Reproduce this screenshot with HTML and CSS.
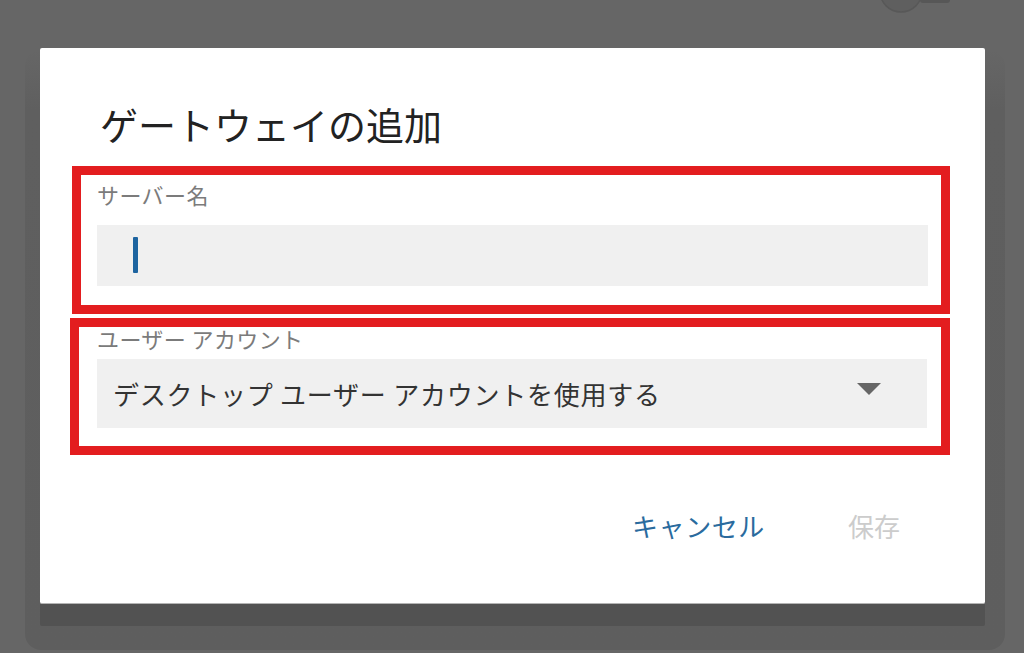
FILE: index.html
```html
<!DOCTYPE html>
<html lang="ja">
<head>
<meta charset="utf-8">
<title>ゲートウェイの追加</title>
<link rel="stylesheet" href="styles.css">
</head>
<body>
<div class="backdrop"></div>
<svg class="toggle" width="80" height="16" viewBox="0 0 80 16">
  <rect x="40" y="-4" width="30" height="7" rx="3" fill="#575757"/>
  <circle cx="21" cy="-9" r="21" fill="#5f5f5f" stroke="#585858" stroke-width="1.5"/>
</svg>
<div class="dialog">
  <h1 class="title">ゲートウェイの追加</h1>
  <div class="group group-server">
    <div class="label">サーバー名</div>
    <div class="field"><span class="caret"></span></div>
  </div>
  <div class="group group-account">
    <div class="label">ユーザー アカウント</div>
    <div class="select">
      <span class="select-text">デスクトップ ユーザー アカウントを使用する</span>
      <span class="arrow"></span>
    </div>
  </div>
  <div class="actions">
    <span class="btn btn-cancel">キャンセル</span>
    <span class="btn btn-save">保存</span>
  </div>
</div>
</body>
</html>
```

FILE: styles.css
```css
html, body {
  margin: 0;
  padding: 0;
}
body {
  width: 1024px;
  height: 653px;
  overflow: hidden;
  position: relative;
  background: #666666;
  font-family: "Noto Sans CJK JP", "Noto Sans", sans-serif;
}
.backdrop {
  position: absolute;
  left: 25px;
  right: 19px;
  top: 50px;
  bottom: 3px;
  border-radius: 16px;
  background: linear-gradient(to bottom, #666666 0px, #5f5f5f 60px, #5e5e5e 100%);
}
.toggle {
  position: absolute;
  left: 880px;
  top: 0;
}
.dialog {
  position: relative;
  box-sizing: border-box;
  width: 945px;
  height: 556px;
  margin: 48px 0 0 40px;
  background: #ffffff;
  border-radius: 2px;
  border-bottom: 1px solid #b4b4b4;
  box-shadow: 0 22px 0 0 #525252;
}
.title {
  margin: 0;
  padding: 57px 0 0 60px;
  font-size: 38px;
  line-height: 38px;
  font-weight: 400;
  color: #222222;
}
.group {
  box-sizing: border-box;
  border: 9px solid #e31d1f;
}
.group-server {
  width: 878px;
  margin: 23px 0 0 32px;
  padding: 8px 13px 19px 16px;
}
.group-account {
  width: 880px;
  margin: 4px 0 0 30px;
  padding: 0 14px 18px 18px;
}
.label {
  font-size: 22px;
  line-height: 22px;
  letter-spacing: 0.4px;
  color: #7b7b7b;
}
.field {
  margin-top: 20px;
  height: 61px;
  background: #f0f0f0;
  display: flex;
  align-items: flex-start;
}
.caret {
  display: block;
  width: 5px;
  height: 36px;
  margin: 12px 0 0 36px;
  background: #1d64a0;
  border-radius: 1px;
}
.select {
  margin-top: 10px;
  height: 69px;
  background: #f0f0f0;
  display: flex;
  align-items: center;
  justify-content: space-between;
  padding: 0 46px 0 16px;
  font-size: 26px;
  line-height: 26px;
  color: #333333;
}
.select-text {
  letter-spacing: 0.75px;
}
.arrow {
  width: 0;
  height: 0;
  border-left: 12px solid transparent;
  border-right: 12px solid transparent;
  border-top: 12px solid #666666;
  margin-top: -9px;
}
.actions {
  display: flex;
  justify-content: flex-end;
  gap: 83px;
  margin-top: 58px;
  padding-right: 85px;
  font-size: 26px;
  line-height: 26px;
}
.btn-cancel {
  color: #2a6b9e;
  letter-spacing: 0.6px;
}
.btn-save {
  color: #cccccc;
}
```
